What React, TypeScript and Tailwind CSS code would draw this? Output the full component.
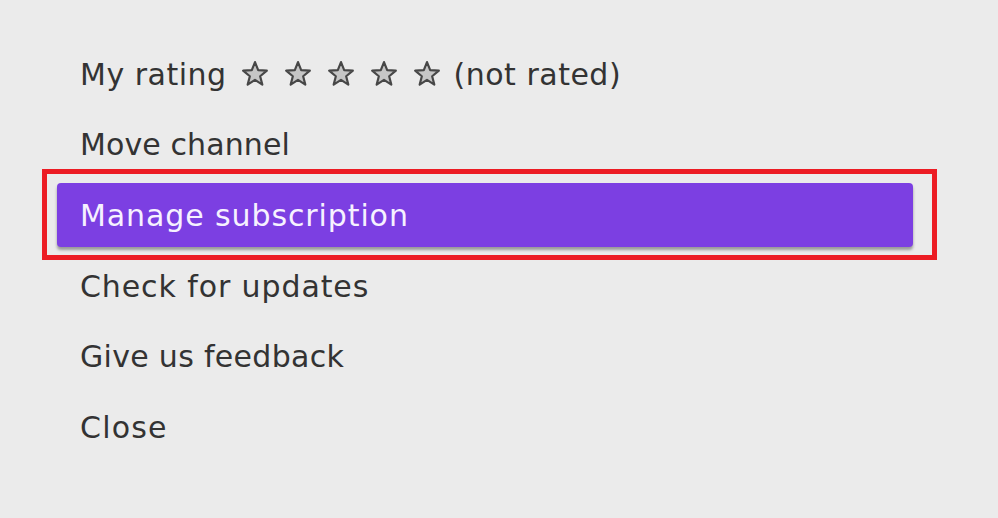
import React from 'react';

const items = [
  { label: 'Move channel', track: 'tracking-[0.1px]' },
  { label: 'Manage subscription', track: 'tracking-[0.9px]' },
  { label: 'Check for updates', track: 'tracking-[0.9px]' },
  { label: 'Give us feedback', track: 'tracking-[0.3px]' },
  { label: 'Close', track: 'tracking-[1.2px]' },
];

function Star() {
  return (
    <svg width="26" height="26" viewBox="0 0 24 24" className="shrink-0 overflow-visible">
      <path
        d="M12 1L14.94 8.46L22.94 8.95L16.76 14.05L18.76 21.8L12 17.5L5.24 21.8L7.24 14.05L1.06 8.95L9.06 8.46Z"
        fill="#c6c6c6"
        stroke="#474747"
        strokeWidth="2"
        strokeLinejoin="round"
      />
    </svg>
  );
}

export default function App() {
  return (
    <div
      className="w-[998px] h-[518px] bg-[#ebebeb] text-[#333333] overflow-hidden"
      style={{ fontFamily: '"DejaVu Sans", "Liberation Sans", sans-serif' }}
    >
      <div className="flex flex-col pt-[39px] pl-[57px] pr-[85px] text-[30px]">
        {/* rating row */}
        <div className="h-[70.6px] flex items-center pl-[23px] tracking-[0.5px]">
          <span>My rating</span>
          <div className="flex items-center gap-[17px] ml-[15px] mr-[14px]">
            <Star />
            <Star />
            <Star />
            <Star />
            <Star />
          </div>
          <span>(not rated)</span>
        </div>

        {items.map(({ label, track }) =>
          label === 'Manage subscription' ? (
            <div key={label} className="h-[70.6px] flex items-center">
              <div className={`relative w-full h-[64px] flex items-center pl-[23px] rounded-[4px] bg-[#7c3fe2] text-[#f6f1ff] shadow-[0_3px_3px_rgba(0,0,0,0.35)] ${track}`}>
                {label}
                <div className="absolute -left-[15px] -right-[24px] -top-[14px] -bottom-[13px] border-[5px] border-[#ec1c24] pointer-events-none" />
              </div>
            </div>
          ) : (
            <div key={label} className={`h-[70.6px] flex items-center pl-[23px] ${track}`}>
              {label}
            </div>
          )
        )}
      </div>
    </div>
  );
}
